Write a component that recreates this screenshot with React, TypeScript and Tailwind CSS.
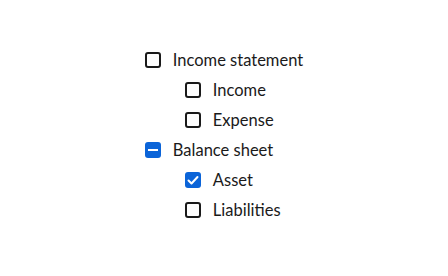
const tree = [
  { label: 'Income statement', state: 'off', depth: 0 },
  { label: 'Income', state: 'off', depth: 1 },
  { label: 'Expense', state: 'off', depth: 1 },
  { label: 'Balance sheet', state: 'mixed', depth: 0 },
  { label: 'Asset', state: 'on', depth: 1 },
  { label: 'Liabilities', state: 'off', depth: 1 },
]

function Box({ state }: { state: string }) {
  if (state === 'off') return <span className="h-4 w-4 shrink-0 rounded-[3px] border-2 border-[#1a1a1a] bg-white" />
  return (
    <span className="flex h-4 w-4 shrink-0 items-center justify-center rounded-[3px] bg-[#0b64d8]">
      {state === 'on' ? (
        <svg viewBox="0 0 16 16" className="h-4 w-4" fill="none" stroke="white" strokeWidth="2" strokeLinecap="round" strokeLinejoin="round">
          <path d="M3.5 8.5l3 3 6-6.5" />
        </svg>
      ) : (
        <span className="h-[2px] w-[10px] bg-white" />
      )}
    </span>
  )
}

export default function App() {
  return (
    <div className="flex h-[276px] w-[448px] items-center justify-center bg-white font-['Lato',sans-serif] text-[16.5px] text-[#1a1a1a]">
      <div className="flex flex-col gap-[14px] pb-[6px]">
        {tree.map((t) => (
          <label key={t.label} className={`flex h-4 items-center gap-3 ${t.depth ? 'pl-10' : ''}`}>
            <Box state={t.state} />
            <span>{t.label}</span>
          </label>
        ))}
      </div>
    </div>
  )
}
